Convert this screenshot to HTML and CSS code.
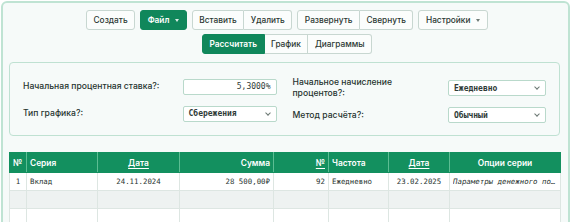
FILE: index.html
```html
<!DOCTYPE html>
<html lang="ru">
<head>
<meta charset="utf-8">
<link rel="stylesheet" href="styles.css">
</head>
<body>
<div class="frame">
  <div class="toolbar">
    <div class="tb-row">
      <button class="btn">Создать</button>
      <button class="btn primary">Файл <span class="caret"></span></button>
      <div class="group">
        <button class="btn">Вставить</button>
        <button class="btn">Удалить</button>
      </div>
      <div class="group">
        <button class="btn">Развернуть</button>
        <button class="btn">Свернуть</button>
      </div>
      <button class="btn">Настройки <span class="caret dark"></span></button>
    </div>
    <div class="tb-row">
      <div class="group">
        <button class="btn primary">Рассчитать</button>
        <button class="btn">График</button>
        <button class="btn">Диаграммы</button>
      </div>
    </div>
  </div>

  <div class="panel">
    <div class="fields left">
      <label class="lbl">Начальная процентная ставка?:</label>
      <div class="ctrl input">5,3000%</div>
      <label class="lbl">Тип графика?:</label>
      <div class="ctrl select">Сбережения<span class="chev"></span></div>
    </div>
    <div class="fields right">
      <label class="lbl">Начальное начисление<br>процентов?:</label>
      <div class="ctrl select">Ежедневно<span class="chev"></span></div>
      <label class="lbl">Метод расчёта?:</label>
      <div class="ctrl select">Обычный<span class="chev"></span></div>
    </div>
  </div>

  <table class="grid">
    <colgroup>
      <col class="c1"><col class="c2"><col class="c3"><col class="c4"><col class="c5"><col class="c6"><col class="c7"><col class="c8">
    </colgroup>
    <thead>
      <tr>
        <th class="tl">№</th>
        <th class="tl">Серия</th>
        <th class="tc"><u>Дата</u></th>
        <th class="tr">Сумма</th>
        <th class="tr"><u>№</u></th>
        <th class="tl">Частота</th>
        <th class="tc"><u>Дата</u></th>
        <th class="tc">Опции серии</th>
      </tr>
    </thead>
    <tbody>
      <tr>
        <td class="tc">1</td>
        <td class="tl">Вклад</td>
        <td class="tc">24.11.2024</td>
        <td class="tr">28 500,00₽</td>
        <td class="tr">92</td>
        <td class="tl">Ежедневно</td>
        <td class="tc">23.02.2025</td>
        <td class="tl opt"><span class="ell">Параметры денежного потока</span></td>
      </tr>
      <tr class="alt">
        <td></td><td></td><td></td><td></td><td></td><td></td><td></td><td></td>
      </tr>
      <tr>
        <td></td><td></td><td></td><td></td><td></td><td></td><td></td><td></td>
      </tr>
    </tbody>
  </table>
</div>
</body>
</html>
```

FILE: styles.css
```css
html, body {
  margin: 0;
  padding: 0;
  background: #ffffff;
}
body {
  font-family: Inter, "Noto Sans", sans-serif;
  color: #23302b;
  padding: 1px 0 0 1px;
}
.frame {
  width: 556px;
  height: 240px;
  border: 2px solid #bfe3d3;
  border-radius: 6px;
  background: #f6faf9;
  padding: 7px 3px 0 6px;
}
.toolbar {
  display: flex;
  flex-direction: column;
  align-items: center;
  gap: 4px;
}
.tb-row {
  display: flex;
  gap: 5px;
  align-items: center;
}
.btn {
  font-family: Inter, "Noto Sans", sans-serif;
  font-size: 8.3px;
  font-weight: 500;
  color: #2b3833;
  height: 20px;
  padding: 0 6.5px;
  background: #fbfdfc;
  border: 1px solid #c8d7d1;
  border-radius: 3px;
  display: inline-flex;
  align-items: center;
  gap: 6px;
  line-height: 1;
}
.btn.primary {
  background: #10875b;
  border-color: #10875b;
  color: #ffffff;
  font-weight: 600;
}
.group {
  display: flex;
}
.group .btn {
  border-radius: 0;
}
.group .btn + .btn {
  border-left: none;
}
.group .btn:first-child {
  border-radius: 3px 0 0 3px;
}
.group .btn:last-child {
  border-radius: 0 3px 3px 0;
}
.caret {
  width: 0;
  height: 0;
  border-left: 2.5px solid transparent;
  border-right: 2.5px solid transparent;
  border-top: 3px solid #ffffff;
  opacity: 0.85;
}
.caret.dark {
  border-top-color: #55635d;
}

.panel {
  margin-top: 8px;
  width: 523px;
  border: 1px solid #bfe1d2;
  border-radius: 4px;
  padding: 14px 13px 12px 13px;
  display: flex;
  gap: 16px;
}
.fields {
  display: grid;
  grid-template-columns: 1fr auto;
  row-gap: 8px;
  align-items: center;
}
.fields.left {
  width: 254px;
}
.fields.right {
  width: 254px;
}
.lbl {
  font-size: 8.6px;
  font-weight: 500;
  line-height: 11px;
  color: #27342f;
}
.ctrl {
  border: 1px solid #b9d9cb;
  border-radius: 2px;
  background: #ffffff;
  font-family: "DejaVu Sans Mono", monospace;
  font-size: 8px;
  font-weight: 600;
  color: #2f3b37;
  display: flex;
  align-items: center;
  box-sizing: border-box;
  height: 16px;
}
.left .ctrl {
  width: 94px;
}
.right .ctrl {
  width: 98px;
}
.input {
  justify-content: flex-end;
  padding-right: 5px;
  font-weight: 400;
}
.select {
  padding-left: 5px;
  padding-right: 6px;
  justify-content: space-between;
}
.chev {
  width: 3px;
  height: 3px;
  border-right: 1px solid #6b7873;
  border-bottom: 1px solid #6b7873;
  transform: rotate(45deg);
  margin-top: -2px;
}

.grid {
  margin-top: 16px;
  width: 551px;
  border-collapse: collapse;
  table-layout: fixed;
}
.c1 { width: 17px; }
.c2 { width: 71px; }
.c3 { width: 82px; }
.c4 { width: 94px; }
.c5 { width: 55px; }
.c6 { width: 60px; }
.c7 { width: 61px; }
.c8 { width: 111px; }
.grid th {
  background: #13905f;
  color: #ffffff;
  font-size: 8.4px;
  font-weight: 600;
  height: 20px;
  padding: 0 3px;
  border: 1px solid #13905f;
  border-left-color: #5cbd93;
  border-right-color: #5cbd93;
  box-sizing: border-box;
}
.grid th:first-child {
  border-left-color: #13905f;
}
.grid th:last-child {
  border-right-color: #13905f;
}
.grid th u {
  text-decoration-thickness: 1px;
  text-underline-offset: 1.5px;
}
.grid td {
  height: 18px;
  box-sizing: border-box;
  border: 1px solid #dde6e2;
  background: #ffffff;
  font-family: "DejaVu Sans Mono", monospace;
  font-size: 7.4px;
  color: #2a3531;
  padding: 0 3px;
  white-space: nowrap;
  overflow: hidden;
}
.grid tr.alt td {
  background: #eef2f1;
}
.tl { text-align: left; }
.tc { text-align: center; }
.tr { text-align: right; }
.opt {
  font-style: italic;
}
.ell {
  display: block;
  overflow: hidden;
  text-overflow: ellipsis;
  white-space: nowrap;
}
```
